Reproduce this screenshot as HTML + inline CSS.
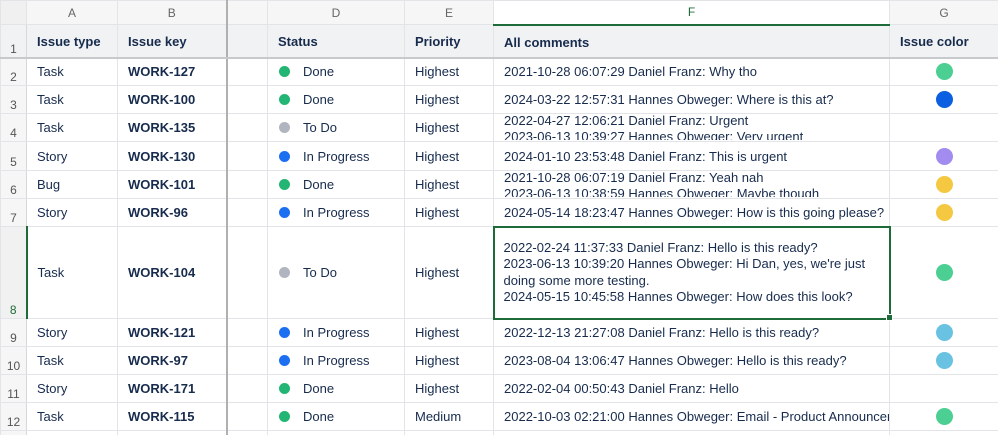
<!DOCTYPE html>
<html><head><meta charset="utf-8"><style>
*{margin:0;padding:0;box-sizing:border-box}
html,body{width:998px;height:435px;overflow:hidden}
body{background:#fff;font-family:"Liberation Sans",Arial,sans-serif;color:#172b4d;font-size:13px;position:relative}
table{border-collapse:collapse;table-layout:fixed;position:absolute;left:0;top:0;width:998px}
td{border:1px solid #e3e4e8;padding:0 0 0 10px;vertical-align:middle;white-space:nowrap;overflow:hidden;text-overflow:clip}
tr.ch td{background:#f6f6f7;color:#666;font-size:12px;text-align:center;padding:0;height:24px}
td.rn{background:#f6f6f7;color:#555;font-size:12px;text-align:center;vertical-align:bottom;padding:0 0 1px 0;border-right:1px solid #d8d8d8}
tr.h td{background:#f1f2f4;font-weight:bold;border-bottom:2px solid #c8c9cc;padding-top:2px}
tr.h td.rn{font-weight:normal}
td.b{font-weight:bold}
.dot{display:inline-block;width:11px;height:11px;border-radius:50%;vertical-align:-1px;margin-right:13px;margin-left:1px}
.g{background:#22b573}.bl{background:#1d6ff2}.gr{background:#b1b5bf}
td.c{text-align:center;padding:0}
.ic{display:inline-block;width:17px;height:17px;border-radius:50%;vertical-align:middle}
.ml{height:27px;overflow:hidden;line-height:16px;margin-top:-2px}
.ml8{line-height:16.5px;white-space:normal}
td.sep{border-left:2px solid #b0b0b0}
</style></head><body>
<table>
<colgroup><col style="width:26px"><col style="width:91px"><col style="width:109px"><col style="width:41px"><col style="width:137px"><col style="width:89px"><col style="width:396px"><col style="width:109px"></colgroup>
<tr class="ch"><td style="background:#f0f0f0"></td><td>A</td><td>B</td><td class="sep"></td><td>D</td><td>E</td><td style="color:#1e6b3a;background:#fff;border-bottom:2px solid #1e6b3a">F</td><td>G</td></tr>
<tr class="h" style="height:33px"><td class="rn">1</td><td>Issue type</td><td>Issue key</td><td class="sep"></td><td>Status</td><td>Priority</td><td>All comments</td><td>Issue color</td></tr>
<tr style="height:28px"><td class="rn">2</td><td>Task</td><td class="b">WORK-127</td><td class="sep"></td><td><span class="dot g"></span>Done</td><td>Highest</td><td>2021-10-28 06:07:29 Daniel Franz: Why tho</td><td class="c"><span class="ic" style="background:#4ccf92"></span></td></tr>
<tr style="height:28px"><td class="rn">3</td><td>Task</td><td class="b">WORK-100</td><td class="sep"></td><td><span class="dot g"></span>Done</td><td>Highest</td><td>2024-03-22 12:57:31 Hannes Obweger: Where is this at?</td><td class="c"><span class="ic" style="background:#0c5fe0"></span></td></tr>
<tr style="height:28px"><td class="rn">4</td><td>Task</td><td class="b">WORK-135</td><td class="sep"></td><td><span class="dot gr"></span>To Do</td><td>Highest</td><td><div class="ml">2022-04-27 12:06:21 Daniel Franz: Urgent<br>2023-06-13 10:39:27 Hannes Obweger: Very urgent</div></td><td class="c"></td></tr>
<tr style="height:29px"><td class="rn">5</td><td>Story</td><td class="b">WORK-130</td><td class="sep"></td><td><span class="dot bl"></span>In Progress</td><td>Highest</td><td>2024-01-10 23:53:48 Daniel Franz: This is urgent</td><td class="c"><span class="ic" style="background:#a38cf0"></span></td></tr>
<tr style="height:28px"><td class="rn">6</td><td>Bug</td><td class="b">WORK-101</td><td class="sep"></td><td><span class="dot g"></span>Done</td><td>Highest</td><td><div class="ml">2021-10-28 06:07:19 Daniel Franz: Yeah nah<br>2023-06-13 10:38:59 Hannes Obweger: Maybe though</div></td><td class="c"><span class="ic" style="background:#f5c842"></span></td></tr>
<tr style="height:28px"><td class="rn">7</td><td>Story</td><td class="b">WORK-96</td><td class="sep"></td><td><span class="dot bl"></span>In Progress</td><td>Highest</td><td>2024-05-14 18:23:47 Hannes Obweger: How is this going please?</td><td class="c"><span class="ic" style="background:#f5c842"></span></td></tr>
<tr style="height:92px"><td class="rn" style="color:#1e6b3a;border-right:2px solid #1e6b3a;background:#f1f1f1">8</td><td>Task</td><td class="b">WORK-104</td><td class="sep"></td><td><span class="dot gr"></span>To Do</td><td>Highest</td><td style="border:2px solid #1e6b3a;padding-left:9px"><div class="ml8">2022-02-24 11:37:33 Daniel Franz: Hello is this ready?<br>2023-06-13 10:39:20 Hannes Obweger: Hi Dan, yes, we're just<br>doing some more testing.<br>2024-05-15 10:45:58 Hannes Obweger: How does this look?</div></td><td class="c"><span class="ic" style="background:#4ccf92"></span></td></tr>
<tr style="height:28px"><td class="rn">9</td><td>Story</td><td class="b">WORK-121</td><td class="sep"></td><td><span class="dot bl"></span>In Progress</td><td>Highest</td><td>2022-12-13 21:27:08 Daniel Franz: Hello is this ready?</td><td class="c"><span class="ic" style="background:#6ac2e2"></span></td></tr>
<tr style="height:28px"><td class="rn">10</td><td>Task</td><td class="b">WORK-97</td><td class="sep"></td><td><span class="dot bl"></span>In Progress</td><td>Highest</td><td>2023-08-04 13:06:47 Hannes Obweger: Hello is this ready?</td><td class="c"><span class="ic" style="background:#6ac2e2"></span></td></tr>
<tr style="height:28px"><td class="rn">11</td><td>Story</td><td class="b">WORK-171</td><td class="sep"></td><td><span class="dot g"></span>Done</td><td>Highest</td><td>2022-02-04 00:50:43 Daniel Franz: Hello</td><td class="c"></td></tr>
<tr style="height:28px"><td class="rn">12</td><td>Task</td><td class="b">WORK-115</td><td class="sep"></td><td><span class="dot g"></span>Done</td><td>Medium</td><td>2022-10-03 02:21:00 Hannes Obweger: Email - Product Announcement</td><td class="c"><span class="ic" style="background:#4ccf92"></span></td></tr>
<tr style="height:5px"><td class="rn" style="font-size:1px"></td><td style="font-size:1px"></td><td style="font-size:1px"></td><td class="sep" style="font-size:1px"></td><td style="font-size:1px"></td><td style="font-size:1px"></td><td style="font-size:1px"></td><td style="font-size:1px"></td></tr>
</table>
<div style="position:absolute;left:886px;top:314px;width:7px;height:7px;background:#1e6b3a;border:1px solid #fff"></div>
</body></html>
